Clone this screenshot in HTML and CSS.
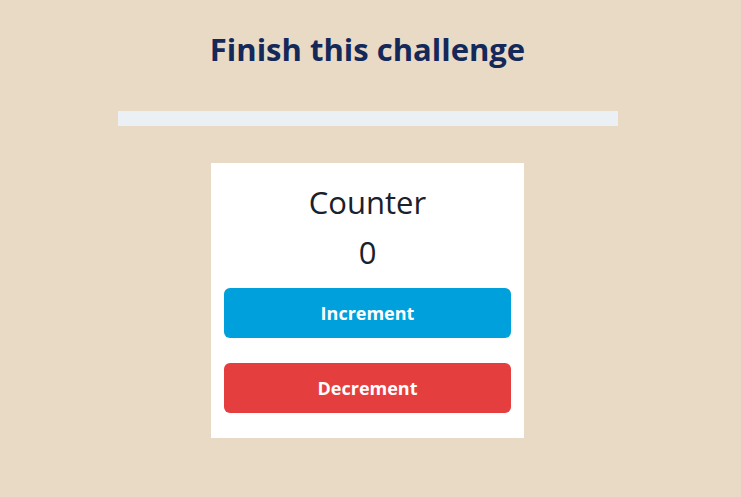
FILE: index.html
```html
<!DOCTYPE html>
<html lang="en">
<head>
<meta charset="utf-8">
<title>Counter</title>
<link rel="stylesheet" href="styles.css">
</head>
<body>
<main class="app">
  <h1 class="title">Finish this challenge</h1>
  <div class="progress"></div>
  <section class="card">
    <h2 class="card-title">Counter</h2>
    <div class="count">0</div>
    <button class="btn btn-inc">Increment</button>
    <button class="btn btn-dec">Decrement</button>
  </section>
</main>
</body>
</html>
```
FILE: styles.css
```css
html, body {
  margin: 0;
  padding: 0;
  background: #e9dac6;
  height: 100%;
}
body {
  font-family: "Open Sans", "Noto Sans", sans-serif;
}
.app {
  width: 735px;
  display: flex;
  flex-direction: column;
  align-items: center;
}
.title {
  margin: 26px 0 0;
  font-size: 31px;
  line-height: 46px;
  font-weight: 700;
  color: #14295a;
}
.progress {
  margin-top: 39px;
  width: 500px;
  height: 15px;
  background: #ebf0f4;
}
.card {
  margin-top: 37px;
  width: 287px;
  padding: 16px 13px 25px;
  background: #fff;
  display: flex;
  flex-direction: column;
  align-items: center;
}
.card-title {
  margin: 0;
  font-size: 31px;
  font-weight: 400;
  line-height: 46px;
  color: #1a202c;
}
.count {
  font-size: 31px;
  line-height: 46px;
  color: #1a202c;
  margin-top: 4px;
}
.btn {
  width: 100%;
  height: 50px;
  border: 0;
  border-radius: 6px;
  color: #fff;
  font-family: inherit;
  font-size: 18px;
  font-weight: 700;
}
.btn-inc {
  margin-top: 13px;
  background: #00a0dc;
}
.btn-dec {
  margin-top: 25px;
  background: #e53e3e;
}
```
